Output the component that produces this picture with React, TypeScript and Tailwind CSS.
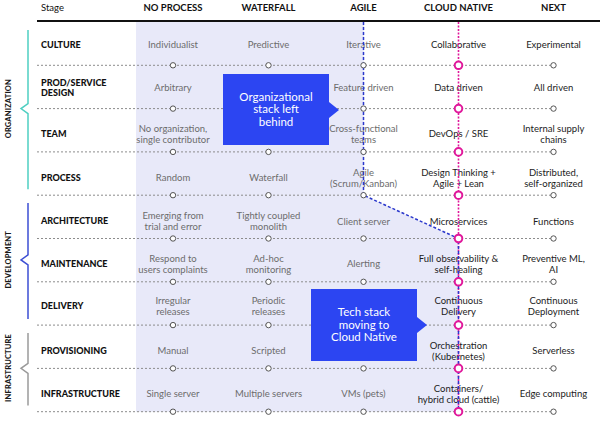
import React from 'react';

// row geometry (px)
const HEAD = 22;
const ROW = 43.3;
const COLS = [173, 268.5, 363.5, 458.5, 553.5];

interface RowData {
  label: string[];
  cells: string[][];
  pad: string;
}

const rows: RowData[] = [
  { label: ['CULTURE'], pad: 'pt-[2px]', cells: [['Individualist'], ['Predictive'], ['Iterative'], ['Collaborative'], ['Experimental']] },
  { label: ['PROD/SERVICE', 'DESIGN'], pad: 'pt-[2px]', cells: [['Arbitrary'], [], ['Feature driven'], ['Data driven'], ['All driven']] },
  { label: ['TEAM'], pad: 'pt-[8px]', cells: [['No organization,', 'single contributor'], [], ['Cross-functional', 'teams'], ['DevOps / SRE'], ['Internal supply', 'chains']] },
  { label: ['PROCESS'], pad: 'pt-[9px]', cells: [['Random'], ['Waterfall'], ['Agile', '(Scrum/Kanban)'], ['Design Thinking +', 'Agile + Lean'], ['Distributed,', 'self-organized']] },
  { label: ['ARCHITECTURE'], pad: 'pt-[9px]', cells: [['Emerging from', 'trial and error'], ['Tightly coupled', 'monolith'], ['Client server'], ['Microservices'], ['Functions']] },
  { label: ['MAINTENANCE'], pad: 'pt-[8px]', cells: [['Respond to', 'users complaints'], ['Ad-hoc', 'monitoring'], ['Alerting'], ['Full observability &', 'self-healing'], ['Preventive ML,', 'AI']] },
  { label: ['DELIVERY'], pad: 'pt-[6px]', cells: [['Irregular', 'releases'], ['Periodic', 'releases'], [], ['Continuous', 'Delivery'], ['Continuous', 'Deployment']] },
  { label: ['PROVISIONING'], pad: 'pt-[9px]', cells: [['Manual'], ['Scripted'], [], ['Orchestration', '(Kubernetes)'], ['Serverless']] },
  { label: ['INFRASTRUCTURE'], pad: 'pt-[8px]', cells: [['Single server'], ['Multiple servers'], ['VMs (pets)'], ['Containers/', 'hybrid cloud (cattle)'], ['Edge computing']] },
];

const cellColor = ['text-[#6c6c6c]', 'text-[#6c6c6c]', 'text-[#6c6c6c]', 'text-[#1c1c1c]', 'text-[#1c1c1c]'];

const Group = ({ label, h, hClass, color }: { label: string; h: number; hClass: string; color: string }) => (
  <div className={`flex ${hClass}`}>
    <div className="w-[18px] flex items-center justify-center">
      <span className="[writing-mode:vertical-rl] rotate-180 text-[7.5px] font-black tracking-[0.02em] text-[#1a1a1a] leading-none">
        {label}
      </span>
    </div>
    <svg width={19} height={h}>
      <path
        d={`M10 8 V${h / 2 - 5} L3 ${h / 2} L10 ${h / 2 + 5} V${h - 6}`}
        fill="none"
        stroke={color}
        strokeWidth={1.5}
      />
    </svg>
  </div>
);

const Callout = ({ lines, pos }: { lines: string[]; pos: string }) => (
  <div className={`absolute ${pos} bg-[#2c45f2] flex items-center justify-center`}>
    <div className="text-white text-[11.5px] leading-[12.5px] text-center">
      {lines.map((l) => (
        <div key={l}>{l}</div>
      ))}
    </div>
    <svg className="absolute left-full top-1/2 -translate-y-1/2" width={10} height={16}>
      <polygon points="0,0 10,8 0,16" fill="#2c45f2" />
    </svg>
  </div>
);

export default function App() {
  const lineYs = rows.map((_, i) => HEAD + ROW * (i + 1));
  const bottom = lineYs[lineYs.length - 1];

  return (
    <div className="relative w-[600px] h-[422px] overflow-hidden bg-white font-['Lato',sans-serif]">
      {/* shaded area behind the legacy stages */}
      <svg className="absolute inset-0" width={600} height={422}>
        <polygon
          points={`136,${HEAD} 364,${HEAD} 364,${lineYs[3]} 458,${lineYs[4]} 458,${bottom} 136,${bottom}`}
          fill="#e8e9f9"
        />
      </svg>

      <div className="relative flex">
        <div className="w-[37px] pt-[22px] flex flex-col">
          <Group label="ORGANIZATION" h={ROW * 4} hClass="h-[173.2px]" color="#4fcfc2" />
          <Group label="DEVELOPMENT" h={ROW * 3} hClass="h-[129.9px]" color="#3d4fd3" />
          <Group label="INFRASTRUCTURE" h={ROW * 2} hClass="h-[86.6px]" color="#9a9a9a" />
        </div>

        <div className="w-[563px]">
          <div className="h-[22px] border-b-2 border-[#111] grid grid-cols-[88px_96px_95px_95px_95px_95px] items-center pb-[3px] text-[9.5px] text-[#111]">
            <div className="pl-[4px]">Stage</div>
            <div className="text-center font-bold">NO PROCESS</div>
            <div className="text-center font-bold">WATERFALL</div>
            <div className="text-center font-bold">AGILE</div>
            <div className="text-center font-bold">CLOUD NATIVE</div>
            <div className="text-center font-bold">NEXT</div>
          </div>

          {rows.map((r) => (
            <div
              key={r.label.join()}
              className={`h-[43.3px] grid grid-cols-[88px_96px_95px_95px_95px_95px] items-center ${r.pad}`}
            >
              <div className="pl-[4px] text-[9px] font-black text-[#111] leading-[10px]">
                {r.label.map((l) => (
                  <div key={l}>{l}</div>
                ))}
              </div>
              {r.cells.map((c, j) => (
                <div key={j} className={`text-center text-[9.5px] leading-[11.5px] ${cellColor[j]}`}>
                  {c.map((l) => (
                    <div key={l}>{l}</div>
                  ))}
                </div>
              ))}
            </div>
          ))}
        </div>
      </div>

      {/* timeline lines + markers */}
      <svg className="absolute inset-0 pointer-events-none" width={600} height={422}>
        {lineYs.map((y) => (
          <line key={y} x1={37} x2={553} y1={y} y2={y} stroke="#8c8c8c" strokeWidth={1} strokeDasharray="2 2" />
        ))}
        <line x1={458.5} x2={458.5} y1={HEAD} y2={bottom} stroke="#e0189b" strokeWidth={1.6} strokeDasharray="2 1.5" />
        <path
          d={`M363.5 ${HEAD} V${lineYs[3]} L458.5 ${lineYs[4]} V${bottom}`}
          fill="none"
          stroke="#2b38cc"
          strokeWidth={1.5}
          strokeDasharray="3 2"
        />
        {lineYs.map((y) =>
          COLS.map((x, j) =>
            j === 3 ? (
              <circle key={`${x}-${y}`} cx={x} cy={y} r={3.8} fill="#fff" stroke="#e0189b" strokeWidth={2} />
            ) : (
              <circle key={`${x}-${y}`} cx={x} cy={y} r={2.7} fill="#fff" stroke="#555" strokeWidth={1} />
            ),
          ),
        )}
      </svg>

      <Callout lines={['Organizational', 'stack left', 'behind']} pos="left-[223px] top-[74px] w-[106px] h-[71px]" />
      <Callout lines={['Tech stack', 'moving to', 'Cloud Native']} pos="left-[311px] top-[289px] w-[106px] h-[72px]" />
    </div>
  );
}
